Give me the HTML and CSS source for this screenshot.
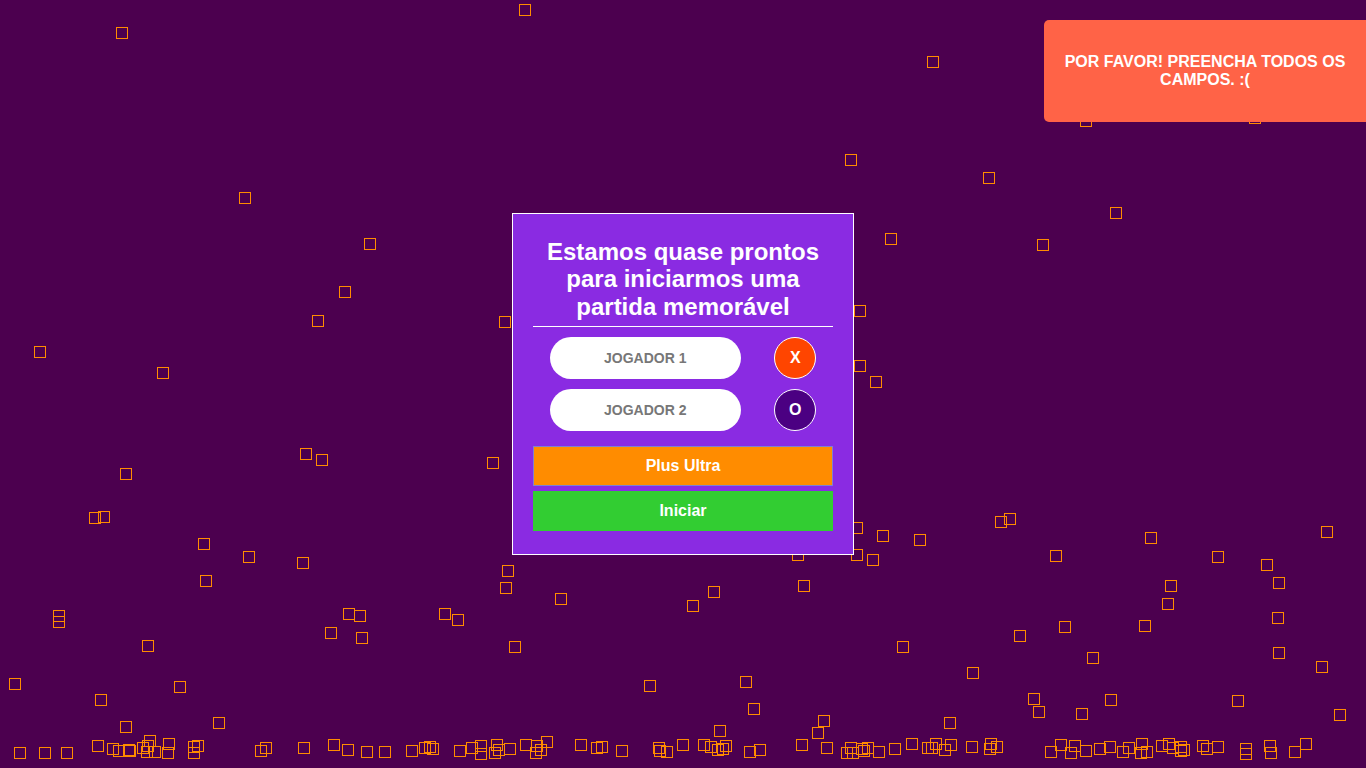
FILE: index.html
```html
<!DOCTYPE html>
<html lang="pt-BR">
<head>
<meta charset="utf-8">
<title>Jogo da Velha</title>
<link rel="stylesheet" href="styles.css">
</head>
<body>
<div class="field" id="field"></div>

<main class="overlay">
  <section class="modal">
    <h2 class="modal-title">Estamos quase prontos para iniciarmos uma partida memorável</h2>
    <hr class="divider">
    <div class="player-row">
      <input class="player-input" type="text" placeholder="JOGADOR 1">
      <span class="token token-x">X</span>
    </div>
    <div class="player-row">
      <input class="player-input" type="text" placeholder="JOGADOR 2">
      <span class="token token-o">O</span>
    </div>
    <div class="actions">
      <button class="btn btn-ultra" type="button">Plus Ultra</button>
      <button class="btn btn-start" type="button">Iniciar</button>
    </div>
  </section>
</main>

<div class="toast">POR FAVOR! PREENCHA TODOS OS CAMPOS. :(</div>

<script src="app.js"></script>
</body>
</html>
```

FILE: styles.css
```css
* { box-sizing: border-box; }

html, body {
  margin: 0;
  padding: 0;
  height: 100%;
}

body {
  background: #4c004f;
  font-family: "Liberation Sans", Arial, sans-serif;
  overflow: hidden;
}

.field {
  position: fixed;
  inset: 0;
  overflow: hidden;
}

.square {
  position: absolute;
  width: 12px;
  height: 12px;
  border: 1px solid #ff8c00;
}

.overlay {
  position: fixed;
  inset: 0;
  display: flex;
  align-items: center;
  justify-content: center;
}

.modal {
  width: 342px;
  background: #8a2be2;
  border: 1px solid #ffffff;
  padding: 24px 20px 23px;
  display: flex;
  flex-direction: column;
}

.modal-title {
  margin: 0;
  color: #ffffff;
  font-size: 24px;
  font-weight: bold;
  line-height: 27.6px;
  text-align: center;
}

.divider {
  border: none;
  height: 1px;
  background: #ffffff;
  margin: 6px 0 0;
}

.player-row {
  display: flex;
  align-items: center;
  justify-content: space-around;
  margin-top: 10px;
}

.player-input {
  width: 191px;
  height: 42px;
  border: none;
  border-radius: 21px;
  background: #ffffff;
  text-align: center;
  font-family: "Liberation Sans", Arial, sans-serif;
  font-size: 14px;
  font-weight: bold;
  color: #555;
  outline: none;
  padding: 0 10px;
}

.player-input::placeholder {
  color: #777777;
  font-weight: bold;
}

.token {
  width: 42px;
  height: 42px;
  border-radius: 50%;
  border: 1px solid #ffffff;
  display: flex;
  align-items: center;
  justify-content: center;
  color: #ffffff;
  font-size: 16px;
  font-weight: bold;
}

.token-x { background: #ff4500; }
.token-o { background: #4b0082; }

.actions {
  display: flex;
  flex-direction: column;
  gap: 5px;
  margin-top: 15px;
}

.btn {
  display: block;
  width: 100%;
  height: 40px;
  color: #ffffff;
  font-family: "Liberation Sans", Arial, sans-serif;
  font-size: 16px;
  font-weight: bold;
  border: none;
  padding: 0;
  cursor: pointer;
}

.btn-ultra {
  background: #ff8c00;
  border: 1px solid #7f7fd2;
}

.btn-start {
  background: #32cd32;
}

.toast {
  position: fixed;
  top: 20px;
  right: 0;
  width: 322px;
  height: 102px;
  background: #ff6347;
  color: #ffffff;
  border-radius: 5px 0 0 5px;
  font-size: 16px;
  font-weight: bold;
  line-height: 18.4px;
  text-align: center;
  padding: 32px 20px;
  display: flex;
  align-items: center;
  justify-content: center;
}
```

FILE: app.js
```js
(function () {
  var pts = [
    519,4, 116,27, 927,56, 1080,115, 1249,112, 845,154, 983,172, 239,192, 1110,207, 885,233,
    364,238, 1037,239, 339,286, 854,305, 312,315, 499,316, 34,346, 854,360, 870,376, 157,367,
    300,448, 316,454, 487,457, 120,468, 89,512, 98,511, 995,516, 1004,513, 1321,526, 198,538,
    851,522, 877,530, 914,534, 1145,532, 243,551, 297,557, 792,549, 851,549, 867,554, 1050,550,
    1212,551, 1261,559, 502,565, 200,575, 1273,577, 500,582, 798,580, 1165,580, 708,586, 555,593,
    687,600, 1162,598, 53,610, 53,616, 343,608, 354,610, 439,608, 452,614, 1272,612, 325,627,
    356,632, 1059,621, 1139,620, 1014,630, 142,640, 509,641, 897,641, 1273,647, 1087,652, 1316,661,
    967,667, 9,678, 174,681, 644,680, 740,676, 95,694, 1028,693, 1105,694, 1232,695, 748,703,
    1033,706, 1076,708, 1334,709, 213,717, 120,721, 818,715, 944,717, 714,725, 812,727,
    14,747, 39,747, 61,747, 92,740, 107,743, 113,745, 123,744, 124,745, 137,742, 142,740,
    144,735, 141,746, 149,746, 163,738, 162,747, 188,741, 192,740, 188,747, 255,745, 260,742,
    298,742, 328,739, 342,744, 361,746, 379,746, 406,745, 419,742, 424,741, 427,743, 454,745,
    466,742, 475,740, 475,748, 491,739, 489,747, 493,744, 504,743, 520,739, 531,740, 535,744,
    530,747, 541,736, 575,739, 591,742, 596,741, 616,745, 653,742, 654,745, 661,746, 677,739,
    698,739, 705,741, 712,744, 720,740, 717,743, 744,746, 754,744, 796,739, 821,742, 841,747,
    845,742, 847,747, 856,743, 858,745, 862,742, 873,746, 889,743, 906,738, 922,742, 926,742,
    930,738, 939,744, 945,739, 966,741, 985,738, 984,743, 991,741, 1045,746, 1055,739, 1065,747,
    1069,740, 1080,745, 1094,743, 1104,741, 1117,746, 1123,742, 1136,738, 1135,747, 1141,746, 1156,740,
    1163,738, 1167,742, 1175,741, 1175,745, 1178,744, 1197,740, 1201,743, 1212,741, 1240,743, 1240,748,
    1264,740, 1265,747, 1289,746, 1300,738
  ];
  var field = document.getElementById('field');
  var frag = document.createDocumentFragment();
  for (var i = 0; i < pts.length; i += 2) {
    var d = document.createElement('div');
    d.className = 'square';
    d.style.left = pts[i] + 'px';
    d.style.top = pts[i + 1] + 'px';
    frag.appendChild(d);
  }
  field.appendChild(frag);
})();
```
